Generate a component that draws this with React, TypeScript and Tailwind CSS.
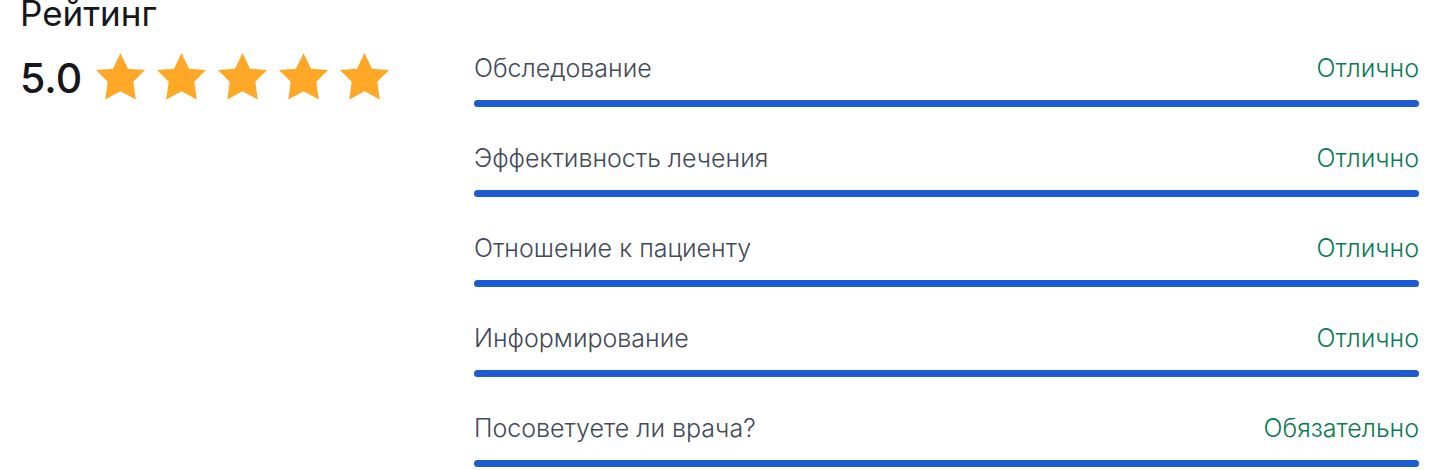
interface Criterion {
  label: string;
  verdict: string;
  score: number;
}

const criteria: Criterion[] = [
  { label: 'Обследование', verdict: 'Отлично', score: 5 },
  { label: 'Эффективность лечения', verdict: 'Отлично', score: 5 },
  { label: 'Отношение к пациенту', verdict: 'Отлично', score: 5 },
  { label: 'Информирование', verdict: 'Отлично', score: 5 },
  { label: 'Посоветуете ли врача?', verdict: 'Обязательно', score: 5 },
];

function Star() {
  return (
    <svg width="49" height="47" viewBox="0 0 49 47" fill="#ffa726" aria-hidden="true">
      <path d="M24.500 0L32 15.800L49 17L37.300 28.800L39.800 46.500L24.500 38.300L9.300 46.500L11.700 28.800L0 17L17 15.800Z" />
    </svg>
  );
}

function CriterionRow({ label, verdict, score }: Criterion) {
  return (
    <li>
      <div className="flex items-center justify-between text-[25px] font-light leading-[30px]">
        <span className="text-[#424958]">{label}</span>
        <span className="text-[#0a7a52]">{verdict}</span>
      </div>
      <div className="mt-[17px] h-[7px] rounded-full bg-gray-200">
        <div className="h-full rounded-full bg-[#1d5bd0]" style={{ width: `${(score / 5) * 100}%` }}></div>
      </div>
    </li>
  );
}

export default function App() {
  return (
    <main className="flex bg-white pl-5 pr-[21px] font-['Inter',sans-serif] text-[#15171c]">
      <section className="w-[454px] shrink-0">
        <h2 className="text-[35px] leading-[26px]">Рейтинг</h2>
        <div className="mt-[22px] flex items-center gap-[14px]">
          <span className="text-[41px] font-medium leading-[60px]">5.0</span>
          <div className="flex gap-3 pb-1" role="img" aria-label="5.0">
            {[1, 2, 3, 4, 5].map((n) => (
              <Star key={n} />
            ))}
          </div>
        </div>
      </section>
      <ul className="flex flex-1 flex-col gap-9 pt-[53px]">
        {criteria.map((item) => (
          <CriterionRow key={item.label} {...item} />
        ))}
      </ul>
    </main>
  );
}
